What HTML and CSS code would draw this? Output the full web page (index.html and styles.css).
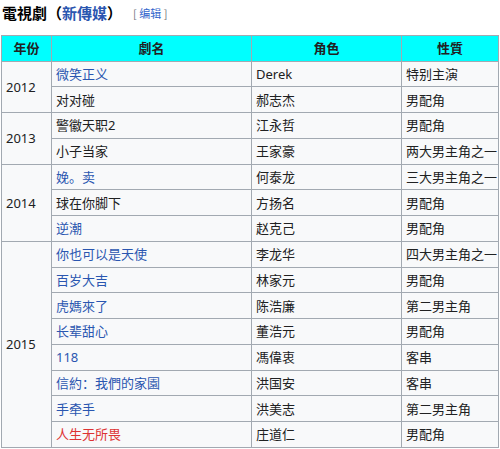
FILE: index.html
```html
<!DOCTYPE html>
<html lang="zh">
<head>
<meta charset="utf-8">
<title>電視劇（新傳媒）</title>
<link rel="stylesheet" href="styles.css">
</head>
<body>
<div class="page">
  <h3 class="heading">
    <span class="headline">電視劇（<a class="link" href="#">新傳媒</a>）</span>
    <span class="editsection"><span class="bracket">[</span> <a class="editlink" href="#">编辑</a> <span class="bracket">]</span></span>
  </h3>
  <table class="wikitable">
    <colgroup>
      <col class="c1"><col class="c2"><col class="c3"><col class="c4">
    </colgroup>
    <thead>
      <tr><th>年份</th><th>劇名</th><th>角色</th><th>性質</th></tr>
    </thead>
    <tbody>
      <tr><td rowspan="2">2012</td><td><a class="link" href="#">微笑正义</a></td><td>Derek</td><td>特别主演</td></tr>
      <tr><td>对对碰</td><td>郝志杰</td><td>男配角</td></tr>
      <tr><td rowspan="2">2013</td><td>警徽天职2</td><td>江永哲</td><td>男配角</td></tr>
      <tr><td>小子当家</td><td>王家豪</td><td>两大男主角之一</td></tr>
      <tr><td rowspan="3">2014</td><td><a class="link" href="#">娩。卖</a></td><td>何泰龙</td><td>三大男主角之一</td></tr>
      <tr><td>球在你脚下</td><td>方扬名</td><td>男配角</td></tr>
      <tr><td><a class="link" href="#">逆潮</a></td><td>赵克己</td><td>男配角</td></tr>
      <tr><td rowspan="8">2015</td><td><a class="link" href="#">你也可以是天使</a></td><td>李龙华</td><td>四大男主角之一</td></tr>
      <tr><td><a class="link" href="#">百岁大吉</a></td><td>林家元</td><td>男配角</td></tr>
      <tr><td><a class="link" href="#">虎媽來了</a></td><td>陈浩廉</td><td>第二男主角</td></tr>
      <tr><td><a class="link" href="#">长辈甜心</a></td><td>董浩元</td><td>男配角</td></tr>
      <tr><td><a class="link" href="#">118</a></td><td>馮偉衷</td><td>客串</td></tr>
      <tr><td><a class="link" href="#">信約：我們的家園</a></td><td>洪国安</td><td>客串</td></tr>
      <tr><td><a class="link" href="#">手牵手</a></td><td>洪美志</td><td>第二男主角</td></tr>
      <tr><td><a class="redlink" href="#">人生无所畏</a></td><td>庄道仁</td><td>男配角</td></tr>
    </tbody>
  </table>
</div>
</body>
</html>
```

FILE: styles.css
```css
html, body {
  margin: 0;
  padding: 0;
  background: #ffffff;
}

body {
  font-family: "Noto Sans", "Noto Sans CJK SC", sans-serif;
  color: #202122;
}

.page {
  padding: 0 2px 0 1px;
}

.heading {
  margin: 0;
  height: 35px;
  display: flex;
  align-items: flex-start;
  gap: 11px;
  padding-top: 3px;
  box-sizing: border-box;
}

.headline {
  font-family: "Noto Sans CJK SC", sans-serif;
  font-size: 15px;
  font-weight: 700;
  line-height: 20px;
  color: #000000;
  padding-left: 1px;
}

.editsection {
  font-family: "Noto Sans CJK SC", sans-serif;
  font-size: 11px;
  font-weight: 400;
  line-height: 20px;
  color: #72777d;
}

.editlink {
  color: #3366cc;
  text-decoration: none;
}

.link {
  color: #2a56b0;
  text-decoration: none;
}

.redlink {
  color: #d33;
  text-decoration: none;
}

.wikitable {
  border-collapse: collapse;
  width: 497px;
  table-layout: fixed;
  background: #f8f9fa;
  border: 1px solid #a2a9b1;
  font-size: 13px;
}

.c1 { width: 50px; }
.c2 { width: 200px; }
.c3 { width: 150px; }
.c4 { width: 97px; }

.wikitable th,
.wikitable td {
  border: 1px solid #a2a9b1;
  padding: 0 4px;
  line-height: 18px;
  box-sizing: border-box;
  font-family: "Noto Sans", "Noto Sans CJK SC", sans-serif;
}

.wikitable th {
  height: 25.5px;
  background: #00ffff;
  font-weight: 700;
  text-align: center;
  color: #202122;
  font-family: "Noto Sans CJK SC", sans-serif;
}

.wikitable td {
  height: 25.75px;
  text-align: left;
  vertical-align: middle;
  white-space: nowrap;
}
```
